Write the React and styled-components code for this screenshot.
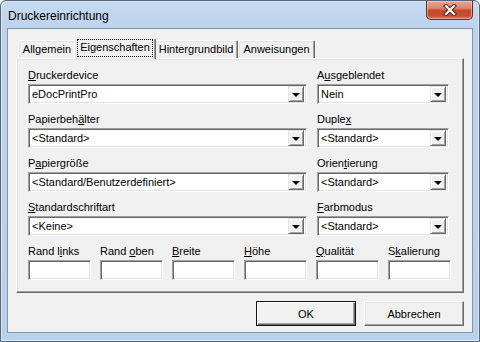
import React from "react";
import styled, { createGlobalStyle, css } from "styled-components";

const Global = createGlobalStyle`
  html, body { margin: 0; padding: 0; background: #fff; }
  body { font-family: "Liberation Sans", Arial, sans-serif; font-size: 11px; color: #000; }
  * { box-sizing: border-box; }
`;

const Window = styled.div`
  width: 480px;
  height: 342px;
  border: 1px solid #54667c;
  border-radius: 6px 6px 0 0;
  background: linear-gradient(to bottom, #c6daf0 0px, #bdd3eb 27px, #b9d1ea 100%);
  box-shadow: inset 1px 1px 0 #dce8f6, inset -1px -1px 0 #dce8f6;
  padding: 0 6px 8px 6px;
  display: flex;
  flex-direction: column;
`;

const TitleBar = styled.div`
  height: 27px;
  display: flex;
  justify-content: space-between;
  align-items: flex-start;
`;

const Title = styled.div`
  font-family: "Liberation Sans", Arial, sans-serif;
  font-size: 12px;
  line-height: 14px;
  padding: 8px 0 0 1px;
  color: #000;
`;

const CloseButton = styled.div`
  width: 47px;
  height: 19px;
  margin-right: 0px;
  border: 1px solid #6b2a1c;
  border-top: none;
  border-radius: 0 0 5px 5px;
  background: linear-gradient(to bottom, #e7a796 0%, #d98670 40%, #c4482d 52%, #c74d31 80%, #d7755b 100%);
  box-shadow: inset 0 0 0 1px rgba(255, 210, 195, 0.55);
  display: flex;
  align-items: center;
  justify-content: center;
`;

const Client = styled.div`
  flex: 1;
  border: 1px solid #8396b0;
  background: #f0f0f0;
  display: flex;
  flex-direction: column;
  padding: 9px 8px 0 8px;
`;

const TabStrip = styled.div`
  display: flex;
  align-items: flex-end;
  height: 20px;
  padding-left: 2px;
`;

const Tab = styled.div`
  width: ${(p) => p.$w}px;
  height: 18px;
  background: #f0f0f0;
  border-left: 1px solid #fff;
  border-top: 1px solid #fff;
  border-right: 1px solid #696969;
  border-radius: 2px 2px 0 0;
  box-shadow: inset -1px 0 0 #a0a0a0, inset 1px 1px 0 #e3e3e3;
  display: flex;
  align-items: center;
  justify-content: center;
  padding-bottom: 1px;
  ${(p) =>
    p.$active &&
    css`
      width: ${p.$w + 4}px;
      height: 21px;
      margin: 0 -2px -1px -2px;
      position: relative;
      z-index: 1;
      padding-bottom: 2px;
    `}
`;

const Focus = styled.span`
  outline: 1px dotted #000;
  outline-offset: 0;
  padding: 1px 2px 2px 2px;
  line-height: 13px;
`;

const Panel = styled.div`
  border-top: 1px solid #fff;
  border-left: 1px solid #fff;
  border-right: 1px solid #696969;
  border-bottom: 1px solid #696969;
  box-shadow: inset -1px -1px 0 #a0a0a0, inset 1px 1px 0 #e3e3e3;
  padding: 9px 11px 12px 11px;
  display: flex;
  flex-direction: column;
  gap: 8px;
`;

const Grid = styled.div`
  display: grid;
  grid-template-columns: 279px 132px;
  column-gap: 10px;
  row-gap: 8px;
`;

const SmallRow = styled.div`
  display: flex;
  gap: 9px;
`;

const Field = styled.div`
  display: flex;
  flex-direction: column;
  gap: 2px;
`;

const Label = styled.div`
  height: 14px;
  line-height: 14px;
  white-space: nowrap;
`;

const Key = styled.span`
  text-decoration: underline;
  text-underline-offset: 1px;
`;

const Sunken = styled.div`
  width: ${(p) => (p.$w ? `${p.$w}px` : "100%")};
  height: 20px;
  background: #fff;
  border: 1px solid;
  border-color: #a0a0a0 #fff #fff #a0a0a0;
  box-shadow: inset 1px 1px 0 #696969, inset -1px -1px 0 #e3e3e3;
  display: flex;
  align-items: center;
  padding: 1px 2px 1px 3px;
`;

const SelectText = styled.span`
  flex: 1;
  line-height: 14px;
  white-space: nowrap;
  overflow: hidden;
`;

const DropButton = styled.div`
  width: 16px;
  height: 16px;
  background: #f0f0f0;
  border: 1px solid;
  border-color: #e3e3e3 #696969 #696969 #e3e3e3;
  box-shadow: inset 1px 1px 0 #fff, inset -1px -1px 0 #a0a0a0;
  display: flex;
  align-items: center;
  justify-content: center;
  &::after {
    content: "";
    border-left: 4px solid transparent;
    border-right: 4px solid transparent;
    border-top: 4px solid #000;
    margin-top: 1px;
  }
`;

const ButtonRow = styled.div`
  display: flex;
  justify-content: flex-end;
  gap: 8px;
  margin-top: 8px;
  padding-right: 0px;
`;

const Button = styled.div`
  width: 100px;
  height: 25px;
  background: #f0f0f0;
  border: 1px solid;
  border-color: #fff #696969 #696969 #fff;
  box-shadow: inset -1px -1px 0 #a0a0a0, inset 1px 1px 0 #e3e3e3;
  display: flex;
  align-items: center;
  justify-content: center;
  line-height: 14px;
  ${(p) =>
    p.$default &&
    css`
      border: 1px solid #1a0f0f;
      box-shadow: inset 1px 1px 0 #fff, inset -1px -1px 0 #696969, inset -2px -2px 0 #a0a0a0;
    `}
`;

const Select = ({ value }) => (
  <Sunken>
    <SelectText>{value}</SelectText>
    <DropButton />
  </Sunken>
);

const tabs = [
  { label: "Allgemein", w: 58 },
  { label: "Eigenschaften", w: 78, active: true },
  { label: "Hintergrundbild", w: 84 },
  { label: "Anweisungen", w: 77 },
];

const gridFields = [
  [["", "D", "ruckerdevice"], "eDocPrintPro"],
  [["A", "u", "sgeblendet"], "Nein"],
  [["Papierbeh", "ä", "lter"], "<Standard>"],
  [["Duple", "x", ""], "<Standard>"],
  [["P", "a", "piergröße"], "<Standard/Benutzerdefiniert>"],
  [["Orien", "t", "ierung"], "<Standard>"],
  [["", "S", "tandardschriftart"], "<Keine>"],
  [["", "F", "arbmodus"], "<Standard>"],
];

const smallFields = [
  ["Rand l", "i", "nks"],
  ["Rand ", "o", "ben"],
  ["", "B", "reite"],
  ["", "H", "öhe"],
  ["", "Q", "ualität"],
  ["S", "k", "alierung"],
];

const LabelText = ({ parts }) => (
  <Label>
    {parts[0]}
    <Key>{parts[1]}</Key>
    {parts[2]}
  </Label>
);

export default function App() {
  return (
    <>
      <Global />
      <Window>
        <TitleBar>
          <Title>Druckereinrichtung</Title>
          <CloseButton>
            <svg width="14" height="12" viewBox="0 0 14 12">
              <path d="M3 2 L11 10 M11 2 L3 10" stroke="#5a2418" strokeWidth="4.2" strokeLinecap="square" />
              <path d="M3 2 L11 10 M11 2 L3 10" stroke="#fff" strokeWidth="2.2" strokeLinecap="square" />
            </svg>
          </CloseButton>
        </TitleBar>
        <Client>
          <TabStrip>
            {tabs.map((t) => (
              <Tab key={t.label} $w={t.w} $active={t.active}>
                {t.active ? <Focus>{t.label}</Focus> : t.label}
              </Tab>
            ))}
          </TabStrip>
          <Panel>
            <Grid>
              {gridFields.map(([parts, value], i) => (
                <Field key={i}>
                  <LabelText parts={parts} />
                  <Select value={value} />
                </Field>
              ))}
            </Grid>
            <SmallRow>
              {smallFields.map((parts, i) => (
                <Field key={i}>
                  <LabelText parts={parts} />
                  <Sunken $w={63} />
                </Field>
              ))}
            </SmallRow>
          </Panel>
          <ButtonRow>
            <Button $default>OK</Button>
            <Button>Abbrechen</Button>
          </ButtonRow>
        </Client>
      </Window>
    </>
  );
}
